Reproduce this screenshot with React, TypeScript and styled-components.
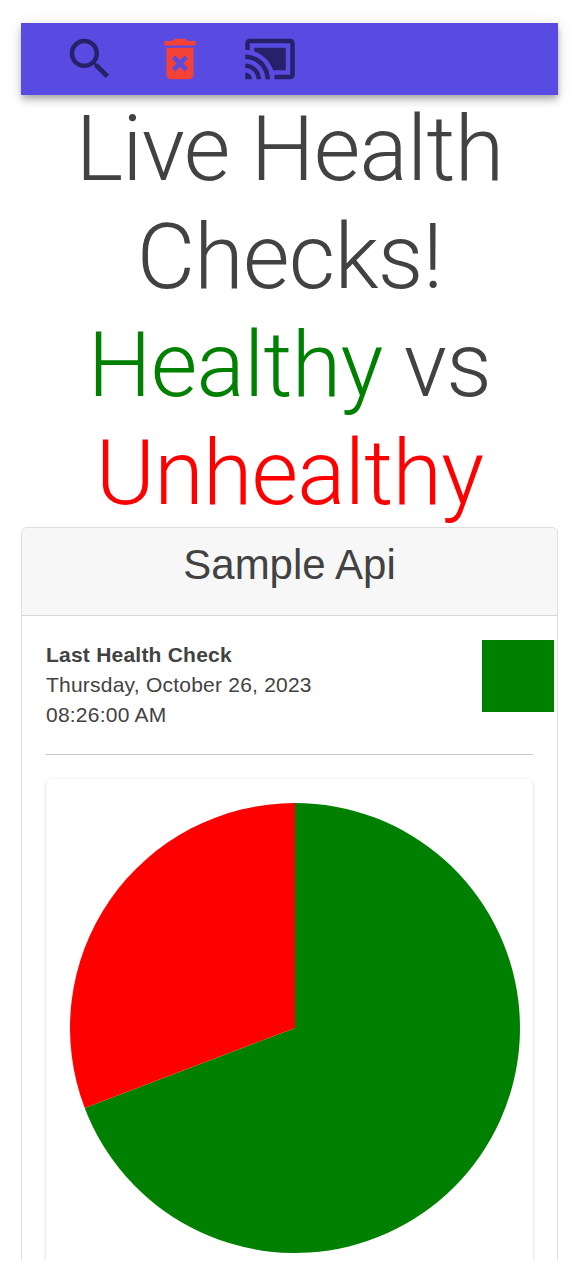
import React from "react";
import styled, { createGlobalStyle } from "styled-components";
import { MdSearch, MdDeleteForever, MdCastConnected } from "react-icons/md";

const GlobalStyle = createGlobalStyle`
  *, *::before, *::after { box-sizing: border-box; }
  html, body { margin: 0; background: #fff; overflow: hidden; height: 1261px; }
  body { color: #424242; font-family: "Liberation Sans", Arial, sans-serif; }
`;

const Page = styled.main`
  height: 1261px;
  padding: 23px 21px 0;
  overflow: hidden;
`;

const AppBar = styled.header`
  display: flex;
  align-items: center;
  gap: 36px;
  height: 72px;
  padding: 0 42px;
  background: #594ae2;
  box-shadow: 0 3px 6px -1.5px rgba(0, 0, 0, 0.2), 0 6px 7.5px 0 rgba(0, 0, 0, 0.14), 0 1.5px 15px 0 rgba(0, 0, 0, 0.12);
`;

const IconButton = styled.button<{ $color: string }>`
  display: flex;
  padding: 0;
  border: 0;
  background: none;
  color: ${(p) => p.$color};
  font-size: 54px;
`;

const Title = styled.h2`
  height: 432px;
  margin: 0;
  padding-top: 1px;
  font: 300 90px/108px Roboto, sans-serif;
  letter-spacing: -0.00833em;
  text-align: center;
`;

const Tone = styled.span<{ $tone: string }>`
  color: ${(p) => p.$tone};
`;

const Card = styled.section`
  border: 1px solid rgba(0, 0, 0, 0.125);
  border-radius: 6px;
`;

const CardHeader = styled.div`
  height: 88px;
  padding: 12px 24px;
  border-bottom: 1px solid rgba(0, 0, 0, 0.125);
  border-radius: 5px 5px 0 0;
  background: rgba(0, 0, 0, 0.03);
`;

const CardTitle = styled.h3`
  margin: 0;
  font-size: 42px;
  font-weight: 400;
  line-height: 50px;
  text-align: center;
`;

const CardBody = styled.div`
  padding: 24px;
`;

const StatusRow = styled.div`
  display: flex;
  justify-content: space-between;
  height: 114px;
  margin-right: -21px;
`;

const CheckInfo = styled.p`
  margin: 0;
  font-size: 21px;
  line-height: 30px;
  letter-spacing: 0.01071em;
`;

const StatusBlock = styled.div`
  width: 72px;
  height: 72px;
  background: green;
`;

const Divider = styled.hr`
  height: 1px;
  margin: 0 0 24px;
  border: 0;
  background: #c8c8c8;
`;

const ChartPaper = styled.div`
  height: 600px;
  padding: 24px;
  border-radius: 6px;
  box-shadow: 0 3px 1.5px -1.5px rgba(0, 0, 0, 0.2), 0 1.5px 1.5px 0 rgba(0, 0, 0, 0.14), 0 1.5px 4.5px 0 rgba(0, 0, 0, 0.12);
`;

const PieChart = styled.svg`
  display: block;
  width: 450px;
  height: 450px;
`;

const iconInk = "#272169";

export default function App() {
  return (
    <>
      <GlobalStyle />
      <Page>
        <AppBar>
          <IconButton $color={iconInk} aria-label="Search"><MdSearch /></IconButton>
          <IconButton $color="#f44336" aria-label="Delete"><MdDeleteForever /></IconButton>
          <IconButton $color={iconInk} aria-label="Cast"><MdCastConnected /></IconButton>
        </AppBar>
        <Title>
          Live Health Checks!<br />
          <Tone $tone="green">Healthy</Tone> vs <Tone $tone="red">Unhealthy</Tone>
        </Title>
        <Card>
          <CardHeader>
            <CardTitle>Sample Api</CardTitle>
          </CardHeader>
          <CardBody>
            <StatusRow>
              <CheckInfo>
                <b>Last Health Check</b><br />
                Thursday, October 26, 2023<br />
                08:26:00 AM
              </CheckInfo>
              <StatusBlock />
            </StatusRow>
            <Divider />
            <ChartPaper>
              <PieChart viewBox="-225 -225 450 450">
                <path d="M0 0V-225A225 225 0 1 1 -210.3 80Z" fill="green" />
                <path d="M0 0L-210.3 80A225 225 0 0 1 0 -225Z" fill="red" />
              </PieChart>
            </ChartPaper>
          </CardBody>
        </Card>
      </Page>
    </>
  );
}
